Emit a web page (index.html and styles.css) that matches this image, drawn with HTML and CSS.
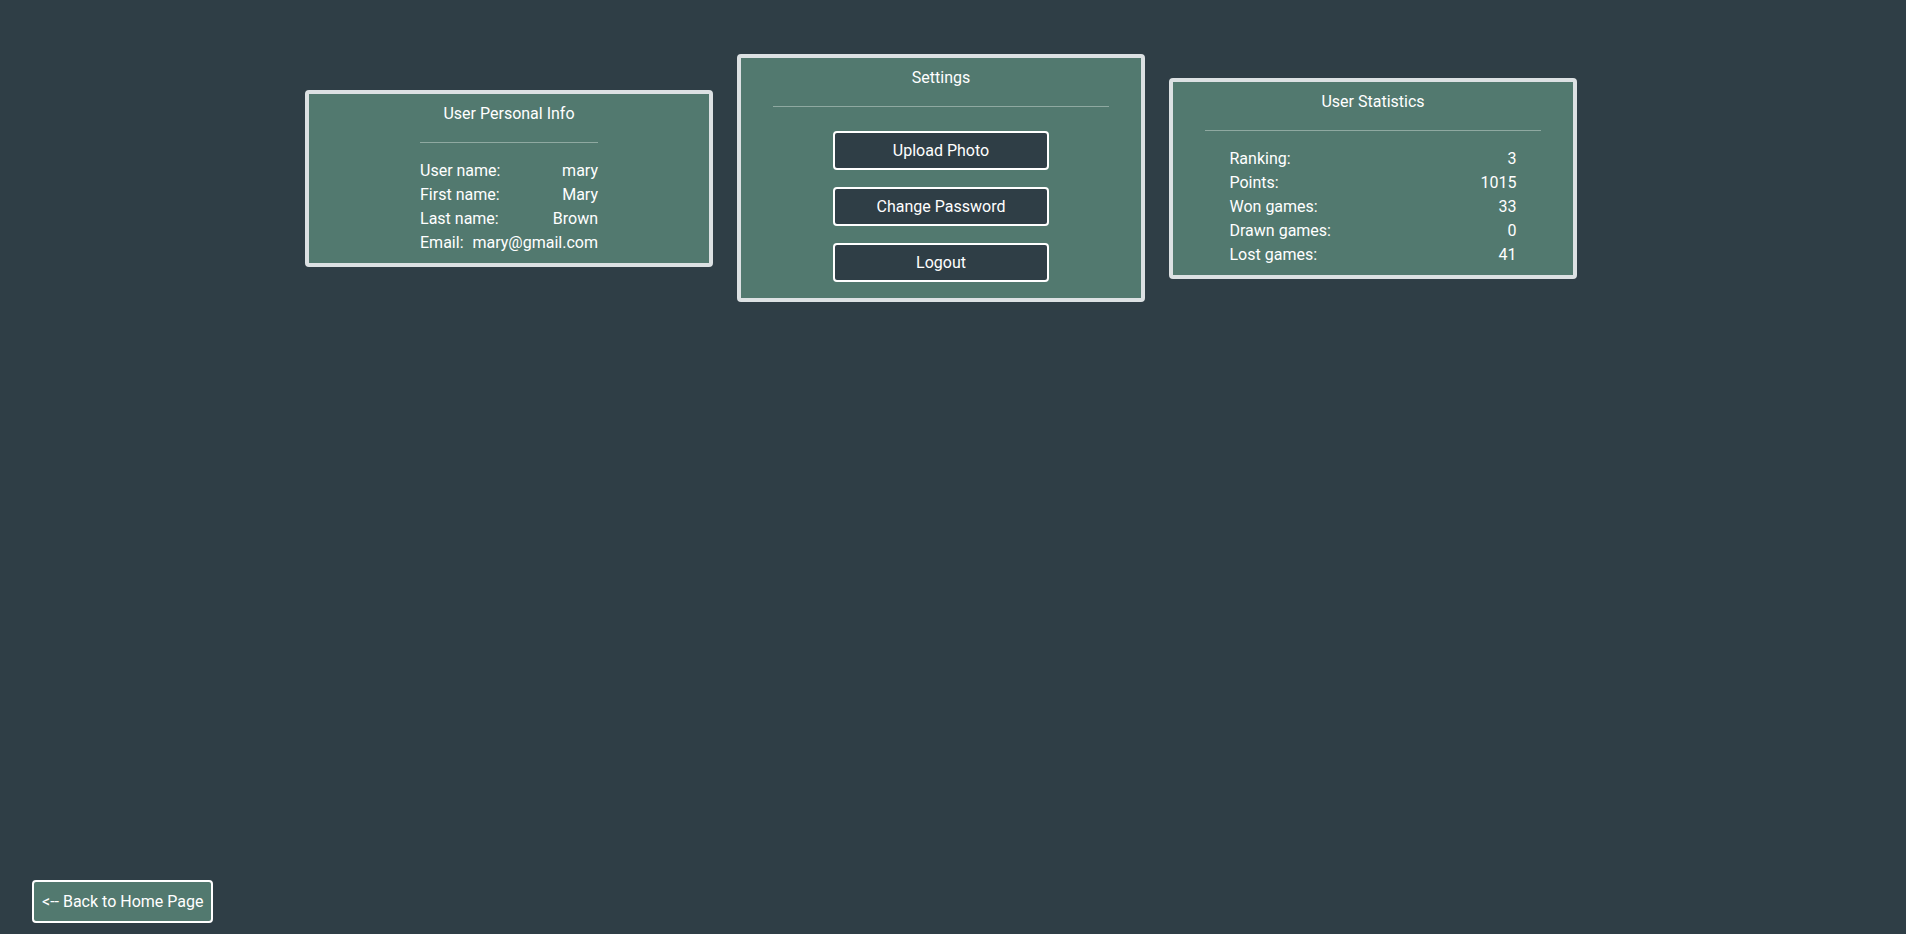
FILE: index.html
```html
<!DOCTYPE html>
<html>
<head>
<meta charset="utf-8">
<title>Profile</title>
<link rel="stylesheet" href="styles.css">
</head>
<body>
<main class="page">
  <section class="cards">
    <div class="card">
      <div class="card-title">User Personal Info</div>
      <div class="info">
        <hr class="rule rule-fit">
        <div class="row"><span>User name:</span><span>mary</span></div>
        <div class="row"><span>First name:</span><span>Mary</span></div>
        <div class="row"><span>Last name:</span><span>Brown</span></div>
        <div class="row"><span>Email:</span><span>mary@gmail.com</span></div>
      </div>
    </div>
    <div class="card">
      <div class="card-title">Settings</div>
      <hr class="rule rule-wide">
      <div class="actions">
        <button class="btn">Upload Photo</button>
        <button class="btn">Change Password</button>
        <button class="btn">Logout</button>
      </div>
    </div>
    <div class="card">
      <div class="card-title">User Statistics</div>
      <hr class="rule rule-wide">
      <div class="stats">
        <div class="row"><span>Ranking:</span><span>3</span></div>
        <div class="row"><span>Points:</span><span>1015</span></div>
        <div class="row"><span>Won games:</span><span>33</span></div>
        <div class="row"><span>Drawn games:</span><span>0</span></div>
        <div class="row"><span>Lost games:</span><span>41</span></div>
      </div>
    </div>
  </section>
  <footer class="footer">
    <button class="back">&lt;-- Back to Home Page</button>
  </footer>
</main>
</body>
</html>
```

FILE: styles.css
```css
html, body {
  margin: 0;
  padding: 0;
  background: #2f3e46;
}
body {
  font-family: Roboto, "Liberation Sans", sans-serif;
  font-size: 16px;
  color: #ffffff;
}
.page {
  min-height: 934px;
  display: flex;
  flex-direction: column;
  box-sizing: border-box;
}
.cards {
  display: flex;
  align-items: center;
  gap: 24px;
  padding: 54px 0 0 305px;
}
.card {
  width: 408px;
  box-sizing: border-box;
  background: #52796f;
  border: 4px solid #dce1e3;
  border-radius: 4px;
  padding: 10px 0 8px;
  display: flex;
  flex-direction: column;
  align-items: center;
}
.card-title {
  line-height: 19px;
  text-align: center;
}
.rule {
  border: 0;
  height: 1px;
  background: #8fa9a1;
  margin: 19px 0 16px;
}
.rule-wide {
  width: 336px;
}
.rule-fit {
  width: 100%;
}
.info {
  width: fit-content;
  align-self: center;
  margin-top: 0;
}
.info .row {
  gap: 9px;
}
.row {
  display: flex;
  justify-content: space-between;
  line-height: 24px;
}
.stats {
  width: 287px;
}
.actions {
  display: flex;
  flex-direction: column;
  gap: 17px;
  margin-top: 8px;
  margin-bottom: 8px;
}
.btn {
  width: 216px;
  height: 39px;
  box-sizing: border-box;
  background: #2f3e46;
  color: #ffffff;
  border: 2px solid #ffffff;
  border-radius: 4px;
  font-family: Roboto, "Liberation Sans", sans-serif;
  font-size: 16px;
}
.footer {
  margin-top: auto;
  padding: 0 0 11px 32px;
}
.back {
  height: 43px;
  box-sizing: border-box;
  padding: 0 8px;
  background: #52796f;
  color: #ffffff;
  border: 2px solid #ffffff;
  border-radius: 4px;
  font-family: Roboto, "Liberation Sans", sans-serif;
  font-size: 16px;
}
```
